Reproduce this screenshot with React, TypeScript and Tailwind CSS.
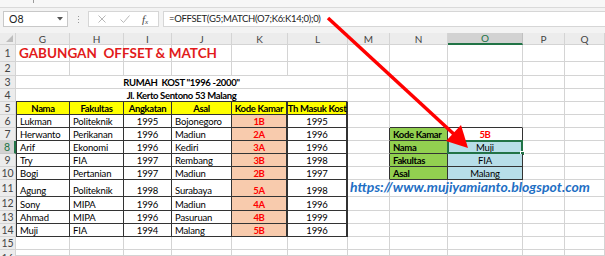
import React from "react";

const COLS = ["G", "H", "I", "J", "K", "L", "M", "N", "O", "P", "Q"];
const ROWS = Array.from({ length: 16 }, (_, i) => i + 1);

const DATA: string[][] = [
  ["Lukman", "Politeknik", "1995", "Bojonegoro", "1B", "1995"],
  ["Herwanto", "Perikanan", "1996", "Madiun", "2A", "1996"],
  ["Arif", "Ekonomi", "1996", "Kediri", "3A", "1996"],
  ["Try", "FIA", "1997", "Rembang", "3B", "1998"],
  ["Bogi", "Pertanian", "1997", "Madiun", "2B", "1997"],
  ["Agung", "Politeknik", "1998", "Surabaya", "5A", "1998"],
  ["Sony", "MIPA", "1996", "Madiun", "4A", "1996"],
  ["Ahmad", "MIPA", "1996", "Pasuruan", "4B", "1999"],
  ["Muji", "FIA", "1994", "Malang", "5B", "1996"],
];

const HEADERS = ["Nama", "Fakultas", "Angkatan", "Asal", "Kode Kamar", "Th Masuk Kost"];

const LOOKUP: [string, string][] = [
  ["Kode Kamar", "5B"],
  ["Nama", "Muji"],
  ["Fakultas", "FIA"],
  ["Asal", "Malang"],
];

const base =
  "flex items-end whitespace-nowrap px-[3px] pb-[1px] text-[9.5px] tracking-[-0.15px] leading-none border-r border-b border-[#d4d4d4]";
const bold = "font-bold tracking-[-0.35px]";

function Cell({ r, c }: { r: number; c: number }) {
  const col = COLS[c];

  // merged title rows
  if ((r === 3 || r === 4) && c > 0 && c < 6) return null;
  if (r === 3 && c === 0)
    return (
      <div className={`${base} ${bold} col-span-6 justify-center`}>
        <span className="whitespace-pre">RUMAH  KOST "1996 -2000"</span>
      </div>
    );
  if (r === 4 && c === 0)
    return (
      <div className={`${base} ${bold} col-span-6 justify-center border-b-[#333]`}>
        Jl. Kerto Sentono 53 Malang
      </div>
    );

  if (r === 1 && c === 0)
    return (
      <div className={`${base} relative z-10 pb-0 text-[13.5px] tracking-normal font-bold text-[#e21b1b]`}>
        <span className="whitespace-pre">GABUNGAN  OFFSET &amp; MATCH</span>
      </div>
    );

  // main table
  if (r >= 5 && r <= 14 && c <= 5) {
    const left = c === 0 ? "border-l border-l-[#333]" : "";
    const thick = c === 4 || c === 5 ? "border-r-2" : "";
    if (r === 5)
      return (
        <div
          className={`${base} ${bold} ${left} ${thick} justify-center px-[1px] bg-[#ffff00] border-r-[#333] border-b-[#333]`}
        >
          {HEADERS[c]}
        </div>
      );
    const v = DATA[r - 6][c];
    if (c === 4)
      return (
        <div
          className={`${base} ${bold} ${thick} justify-center text-[#ff0000] bg-[#f8cbad] border-r-[#333] border-b-[#333]`}
        >
          {v}
        </div>
      );
    const align = c === 2 || c === 5 ? "justify-center" : "";
    return (
      <div className={`${base} ${left} ${thick} ${align} border-r-[#333] border-b-[#333]`}>{v}</div>
    );
  }

  // lookup table
  if (r === 6 && (col === "N" || col === "O"))
    return <div className={`${base} border-b-[#333]`} />;
  if (r >= 7 && r <= 10 && col === "M") return <div className={`${base} border-r-[#333]`} />;
  if (r >= 7 && r <= 10 && col === "N")
    return (
      <div className={`${base} ${bold} bg-[#92d050] border-r-[#333] border-b-[#333]`}>
        {LOOKUP[r - 7][0]}
      </div>
    );
  if (r >= 7 && r <= 10 && col === "O") {
    if (r === 7)
      return (
        <div
          className={`${base} ${bold} justify-center text-[#ff0000] border-r-[#333] border-b-[#333]`}
        >
          {LOOKUP[0][1]}
        </div>
      );
    return (
      <div
        className={`${base} relative justify-center bg-[#b7dee8] border-r-[#333] border-b-[#333]`}
      >
        {LOOKUP[r - 7][1]}
        {r === 8 && (
          <div className="absolute -left-px -top-px -right-px -bottom-px border-2 border-[#217346]">
            <div className="absolute -right-[4px] -bottom-[4px] h-[5px] w-[5px] bg-[#217346] border border-white" />
          </div>
        )}
      </div>
    );
  }

  if (r === 11 && col === "M")
    return (
      <div
        className={`${base} relative z-10 pb-[2px] pl-[2px] text-[14px] tracking-normal font-bold italic text-[#1f6fc4]`}
      >
        https://www.mujiyamianto.blogspot.com
      </div>
    );

  return <div className={base} />;
}

function FormulaBar() {
  return (
    <div className="h-[33px] bg-[#f3f3f3] flex flex-col">
      <div className="h-[8px] bg-[#f7f7f7] border-b border-[#dadada] relative">
        <div className="absolute left-[33px] top-0 h-[3px] w-px bg-[#9a9a9a]" />
      </div>
      <div className="mt-[3px] flex h-[16px] items-stretch">
        <div className="ml-[3px] w-[65px] bg-white border border-[#c8c8c8] flex items-center justify-between pl-[5px] pr-[4px]">
          <span className="text-[10.5px] text-[#222] leading-none">O8</span>
          <svg width="6" height="4" viewBox="0 0 6 4">
            <path d="M0 0h6L3 3.5z" fill="#555" />
          </svg>
        </div>
        <div className="ml-[9px] w-[3px] flex flex-col items-center justify-center gap-[2px]">
          <span className="h-[1px] w-[1px] bg-[#999]" />
          <span className="h-[1px] w-[1px] bg-[#999]" />
          <span className="h-[1px] w-[1px] bg-[#999]" />
        </div>
        <div className="ml-[8px] w-[71px] bg-white border border-[#d6d6d6] flex items-center">
          <svg className="ml-[9px]" width="8" height="8" viewBox="0 0 8 8">
            <path d="M0.5 0.5l7 7M7.5 0.5l-7 7" stroke="#b8b8b8" strokeWidth="1" />
          </svg>
          <svg className="ml-[14px]" width="10" height="8" viewBox="0 0 10 8">
            <path d="M0.5 4.5l3 3L9.5 0.5" stroke="#b8b8b8" strokeWidth="1" fill="none" />
          </svg>
          <span
            className="ml-[12px] text-[11px] italic text-[#444] leading-none"
            style={{ fontFamily: '"Liberation Serif", serif' }}
          >
            f<sub className="text-[7px]">x</sub>
          </span>
        </div>
        <div className="ml-[4px] flex-1 bg-white border border-[#d6d6d6] border-r-0 flex items-center pl-[5px]">
          <span className="text-[9.5px] tracking-[-0.3px] text-[#222] leading-none">
            =OFFSET(G5;MATCH(O7;K6:K14;0);0)
          </span>
        </div>
      </div>
    </div>
  );
}

export default function App() {
  return (
    <div
      className="relative h-[256px] w-[605px] overflow-hidden bg-white text-black"
      style={{ fontFamily: '"Lato", "Carlito", sans-serif' }}
    >
      <FormulaBar />
      <div className="grid grid-cols-[16px_54px_54px_48px_60px_56px_60px_42px_58px_75px_42px_40px] grid-rows-[12px_17px_14px_13px_13px_13px_13px_13px_13px_13px_13px_17px_14px_13px_13px_13px_6px]">
        {/* corner */}
        <div className="relative bg-[#ececec] border-r border-b border-[#d4d4d4]">
          <svg className="absolute right-[2px] bottom-[2px]" width="7" height="7" viewBox="0 0 7 7">
            <path d="M7 0V7H0z" fill="#bdbdbd" />
          </svg>
        </div>
        {COLS.map((c) =>
          c === "O" ? (
            <div
              key={c}
              className="flex items-center justify-center bg-[#d2d2d2] border-r border-[#c0c0c0] border-b-2 border-b-[#217346] text-[10px] text-[#217346] leading-none"
            >
              {c}
            </div>
          ) : (
            <div
              key={c}
              className="flex items-center justify-center bg-[#ececec] border-r border-b border-[#d4d4d4] text-[10px] text-[#444] leading-none"
            >
              {c}
            </div>
          )
        )}
        {ROWS.map((r) => (
          <React.Fragment key={r}>
            {r === 8 ? (
              <div className="flex items-center justify-center bg-[#d2d2d2] border-b border-[#c8c8c8] border-r-2 border-r-[#217346] text-[10.5px] text-[#217346] leading-none">
                {r}
              </div>
            ) : r === 16 ? (
              <div className="flex items-start justify-center pt-[3px] overflow-hidden bg-[#ececec] border-r border-[#d4d4d4] text-[10.5px] text-[#444] leading-none">
                {r}
              </div>
            ) : (
              <div className="flex items-center justify-center bg-[#ececec] border-r border-b border-[#d4d4d4] text-[10.5px] text-[#444] leading-none">
                {r}
              </div>
            )}
            {COLS.map((_, ci) => (
              <Cell key={ci} r={r} c={ci} />
            ))}
          </React.Fragment>
        ))}
      </div>
      <svg className="pointer-events-none absolute left-0 top-0" width="605" height="256" viewBox="0 0 605 256">
        <line x1="328" y1="18" x2="457" y2="137" stroke="#ff0000" strokeWidth="3.5" />
        <polygon points="468,148 446,141 461,125" fill="#ff0000" />
      </svg>
    </div>
  );
}
